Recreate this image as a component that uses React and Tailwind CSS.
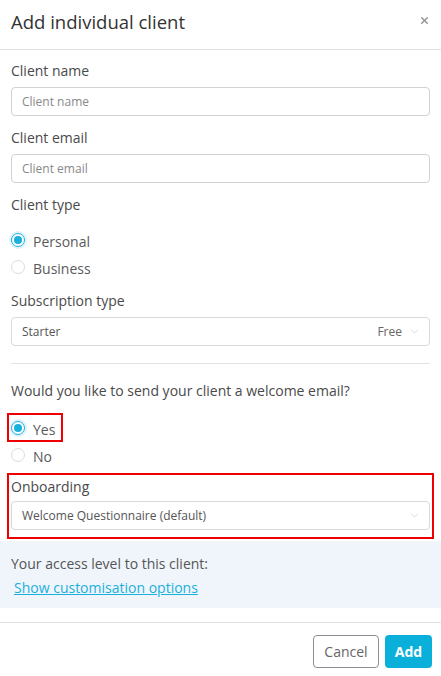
import { X, ChevronDown } from 'lucide-react'

function Radio({ checked, label }) {
  return (
    <div className="flex items-center gap-[8px] h-[27px]">
      {checked ? (
        <span className="w-[14px] h-[14px] rounded-full border border-[#19b0dc] flex items-center justify-center shadow-[0_0_0_2px_rgba(25,176,220,0.15)]">
          <span className="w-[8px] h-[8px] rounded-full bg-[#19b0dc]" />
        </span>
      ) : (
        <span className="w-[14px] h-[14px] rounded-full border border-[#dcdcdc] bg-white" />
      )}
      <span className="text-[14px] text-[#5a5a5a] pt-[3px]">{label}</span>
    </div>
  )
}

function Field({ label, placeholder }) {
  return (
    <div>
      <p className="text-[14px] leading-[20px] text-[#4a4a4a]">{label}</p>
      <div className="mt-[6px] h-[29px] border border-[#d2d2d2] rounded-[4px] flex items-center px-[10px]">
        <span className="text-[12px] text-[#888]">{placeholder}</span>
      </div>
    </div>
  )
}

function Select({ value, right }) {
  return (
    <div className="h-[29px] border border-[#d9d9d9] rounded-[4px] flex items-center pl-[10px] pr-[8px]">
      <span className="flex-1 text-[12px] text-[#555]">{value}</span>
      {right && <span className="text-[12px] text-[#666] mr-[6px]">{right}</span>}
      <ChevronDown size={13} strokeWidth={1} className="text-[#bbb]" />
    </div>
  )
}

export default function App() {
  return (
    <div className="w-[441px] h-[676px] bg-white flex flex-col" style={{ fontFamily: '"Open Sans", "Noto Sans", sans-serif' }}>
      {/* Header */}
      <div className="h-[50px] flex items-center justify-between pl-[11px] pr-[11px] border-b border-[#e3e3e3] shrink-0">
        <h1 className="text-[18.5px] text-[#333] pb-[5px]">Add individual client</h1>
        <X size={11} strokeWidth={3.5} className="text-[#9a9a9a] mb-[8px]" />
      </div>

      {/* Body */}
      <div className="px-[11px] pt-[11px]">
        <Field label="Client name" placeholder="Client name" />
        <div className="mt-[12px]">
          <Field label="Client email" placeholder="Client email" />
        </div>
        <p className="mt-[12px] text-[14px] leading-[20px] text-[#4a4a4a]">Client type</p>
        <div className="mt-[11px] flex flex-col">
          <Radio checked label="Personal" />
          <Radio label="Business" />
        </div>
        <p className="mt-[11px] text-[14px] leading-[20px] text-[#4a4a4a]">Subscription type</p>
        <div className="mt-[6px]">
          <Select value="Starter" right="Free" />
        </div>
        <div className="mt-[17px] border-t border-[#e3e3e3]" />
        <p className="mt-[17px] text-[14px] leading-[20px] text-[#4a4a4a]">Would you like to send your client a welcome email?</p>
        <div className="mt-[12px] -ml-[4px] w-[56px] h-[29px] border-2 border-[#ee0000] pl-[2px] flex items-center">
          <Radio checked label="Yes" />
        </div>
        <div className="mt-[-1px]">
          <Radio label="No" />
        </div>
      </div>
      <div className="mx-[7px] mt-[5px] h-[66px] border-2 border-[#ee0000] px-[2px] pt-[2px]">
        <p className="text-[14px] leading-[20px] text-[#4a4a4a]">Onboarding</p>
        <div className="mt-[4px]">
          <Select value="Welcome Questionnaire (default)" />
        </div>
      </div>

      {/* Access level */}
      <div className="mt-[2px] h-[67px] bg-[#f0f5fc] px-[11px] pt-[13px]">
        <p className="text-[14px] leading-[20px] text-[#555]">Your access level to this client:</p>
        <a href="#" className="block mt-[4px] ml-[3px] text-[14px] leading-[20px] text-[#19b0dc] underline">Show customisation options</a>
      </div>

      {/* Footer */}
      <div className="mt-[14px] border-t border-[#e3e3e3] flex justify-end gap-[6px] px-[9px] pt-[12px]">
        <button className="h-[33px] w-[66px] border border-[#8a8f95] rounded-[4px] text-[14px] text-[#666]">Cancel</button>
        <button className="h-[33px] w-[47px] bg-[#0bb0da] rounded-[4px] text-[14px] font-bold text-white">Add</button>
      </div>
    </div>
  )
}
